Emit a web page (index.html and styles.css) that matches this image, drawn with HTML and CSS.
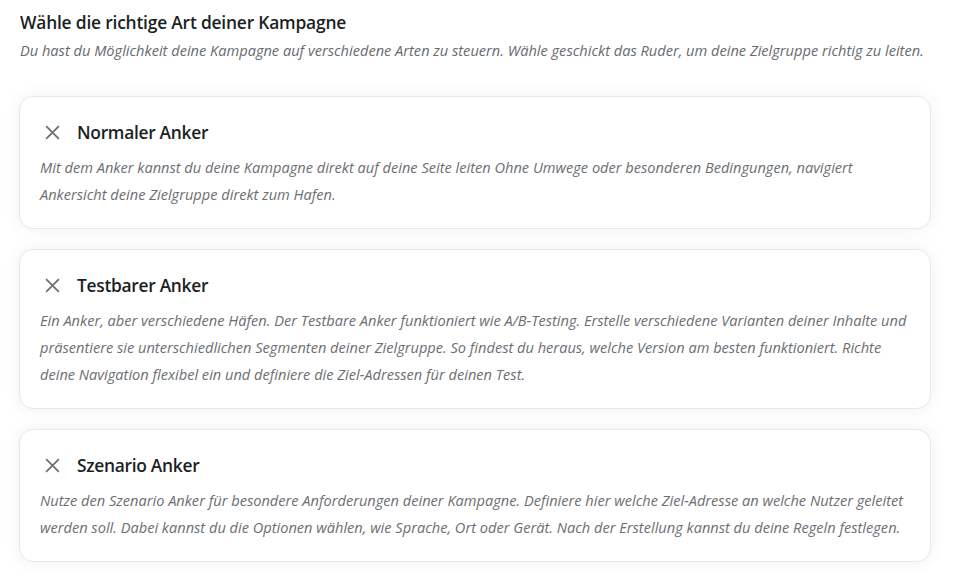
FILE: index.html
```html
<!DOCTYPE html>
<html lang="de">
<head>
<meta charset="utf-8">
<title>Kampagne</title>
<link rel="stylesheet" href="styles.css">
</head>
<body>
<main class="page">
  <header class="intro">
    <h1 class="intro-title">Wähle die richtige Art deiner Kampagne</h1>
    <p class="intro-text">Du hast du Möglichkeit deine Kampagne auf verschiedene Arten zu steuern. Wähle geschickt das Ruder, um deine Zielgruppe richtig zu leiten.</p>
  </header>
  <section class="cards">
    <article class="card">
      <div class="card-head">
        <svg class="card-icon" viewBox="0 0 16 16" aria-hidden="true"><path d="M2 2L14 14M14 2L2 14"/></svg>
        <h2 class="card-title">Normaler Anker</h2>
      </div>
      <p class="card-text">Mit dem Anker kannst du deine Kampagne direkt auf deine Seite leiten Ohne Umwege oder besonderen Bedingungen, navigiert Ankersicht deine Zielgruppe direkt zum Hafen.</p>
    </article>
    <article class="card">
      <div class="card-head">
        <svg class="card-icon" viewBox="0 0 16 16" aria-hidden="true"><path d="M2 2L14 14M14 2L2 14"/></svg>
        <h2 class="card-title">Testbarer Anker</h2>
      </div>
      <p class="card-text">Ein Anker, aber verschiedene Häfen. Der Testbare Anker funktioniert wie A/B-Testing. Erstelle verschiedene Varianten deiner Inhalte und präsentiere sie unterschiedlichen Segmenten deiner Zielgruppe. So findest du heraus, welche Version am besten funktioniert. Richte deine Navigation flexibel ein und definiere die Ziel-Adressen für deinen Test.</p>
    </article>
    <article class="card">
      <div class="card-head">
        <svg class="card-icon" viewBox="0 0 16 16" aria-hidden="true"><path d="M2 2L14 14M14 2L2 14"/></svg>
        <h2 class="card-title">Szenario Anker</h2>
      </div>
      <p class="card-text">Nutze den Szenario Anker für besondere Anforderungen deiner Kampagne. Definiere hier welche Ziel-Adresse an welche Nutzer geleitet werden soll. Dabei kannst du die Optionen wählen, wie Sprache, Ort oder Gerät. Nach der Erstellung kannst du deine Regeln festlegen.</p>
    </article>
  </section>
</main>
</body>
</html>
```

FILE: styles.css
```css
* { box-sizing: border-box; }
html, body { margin: 0; padding: 0; background: #ffffff; }
body {
  font-family: "Open Sans", "Noto Sans", sans-serif;
  color: #1f2328;
}
.page {
  padding: 10px 24px 20px 19px;
  width: 955px;
}
.intro { padding-left: 1px; }
.intro-title {
  margin: 0;
  font-size: 17.4px;
  font-weight: 600;
  line-height: 24px;
  color: #1b1f24;
  letter-spacing: -0.2px;
}
.intro-text {
  margin: 6px 0 0;
  font-size: 14.6px;
  font-style: italic;
  line-height: 20px;
  color: #666a70;
}
.cards {
  margin-top: 36px;
  display: flex;
  flex-direction: column;
  gap: 20px;
}
.card {
  background: #fff;
  border: 1px solid #e8e8e8;
  border-radius: 14px;
  box-shadow: 0 0 18px rgba(0,0,0,0.06);
  padding: 23px 20px 20px 20px;
}
.card-head {
  display: flex;
  align-items: center;
  gap: 16px;
  padding-left: 4px;
  height: 24px;
}
.card-icon {
  width: 17px;
  height: 17px;
  stroke: #6b6e73;
  stroke-width: 1.6;
  fill: none;
  flex: none;
}
.card-title {
  margin: 0;
  font-size: 17.4px;
  font-weight: 600;
  line-height: 24px;
  color: #1b1f24;
  letter-spacing: -0.3px;
}
.card-text {
  margin: 10px 0 0;
  font-size: 14.6px;
  font-style: italic;
  line-height: 27px;
  color: #6b6e73;
}
```
